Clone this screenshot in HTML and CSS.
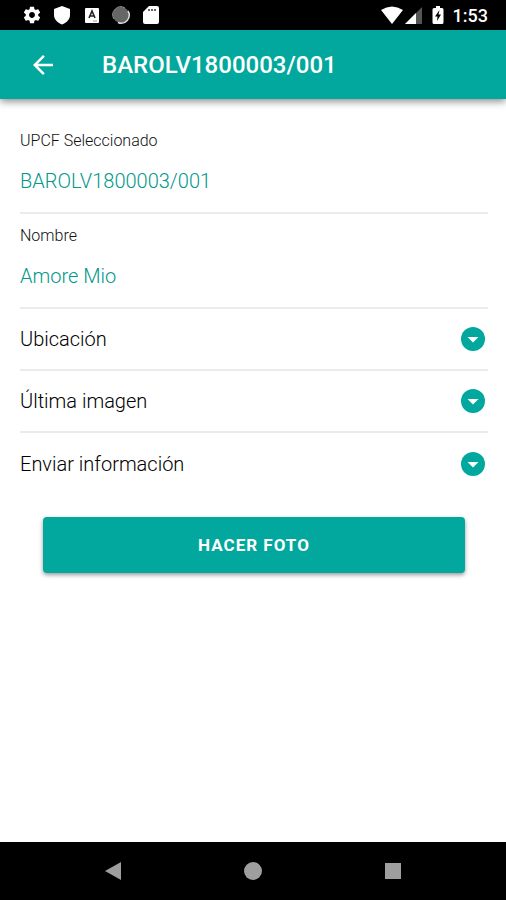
FILE: index.html
```html
<!DOCTYPE html>
<html lang="es">
<head>
<meta charset="UTF-8" />
<meta name="viewport" content="width=device-width, initial-scale=1" />
<title>BAROLV1800003/001</title>
<link rel="stylesheet" href="styles.css">
</head>
<body>

  <div class="status-bar">
    <div class="status-icons">
      <svg width="20" height="20" viewBox="0 0 24 24" fill="#fff" aria-hidden="true"><path d="M19.43 12.98c.04-.32.07-.64.07-.98s-.03-.66-.07-.98l2.11-1.65c.19-.15.24-.42.12-.64l-2-3.46c-.12-.22-.39-.3-.61-.22l-2.49 1c-.52-.4-1.08-.73-1.69-.98l-.38-2.65C14.46 2.18 14.25 2 14 2h-4c-.25 0-.46.18-.49.42l-.38 2.65c-.61.25-1.17.59-1.69.98l-2.49-1c-.23-.09-.49 0-.61.22l-2 3.46c-.13.22-.07.49.12.64l2.11 1.65c-.04.32-.07.65-.07.98s.03.66.07.98l-2.11 1.65c-.19.15-.24.42-.12.64l2 3.46c.12.22.39.3.61.22l2.49-1c.52.4 1.08.73 1.69.98l.38 2.65c.03.24.24.42.49.42h4c.25 0 .46-.18.49-.42l.38-2.65c.61-.25 1.17-.59 1.69-.98l2.49 1c.23.09.49 0 .61-.22l2-3.46c.12-.22.07-.49-.12-.64l-2.11-1.65zM12 15.5c-1.93 0-3.5-1.57-3.5-3.5s1.57-3.5 3.5-3.5 3.5 1.57 3.5 3.5-1.57 3.5-3.5 3.5z"/></svg>
      <svg width="20" height="20" viewBox="0 0 20 20" fill="#fff" aria-hidden="true"><path d="M10 1l8 3v6c0 4-3 7.5-8 9.5C5 17.5 2 14 2 10V4z"/></svg>
      <svg width="20" height="20" viewBox="0 0 20 20" aria-hidden="true"><rect x="3" y="3" width="14" height="15" rx="1" fill="#fff"/><path d="M7 13l3-7 3 7M8 11h4" fill="none" stroke="#222" stroke-width="1.6"/><path d="M11 16h4" stroke="#999"/></svg>
      <svg width="20" height="20" viewBox="0 0 20 20" aria-hidden="true"><circle cx="9" cy="10" r="8" fill="#666"/><path d="M16 6a8 8 0 0 1-10 11.5" fill="none" stroke="#ddd" stroke-width="1.5"/><path d="M2 14A8 8 0 0 1 13 3" fill="none" stroke="#999"/></svg>
      <svg width="20" height="20" viewBox="0 0 20 20" aria-hidden="true"><path d="M7 1h8q2 0 2 2v14q0 2-2 2H3q-2 0-2-2V7z" fill="#fff"/><path d="M7 4v2M10 4v2M13 4v2" stroke="#333" stroke-width="1.5"/></svg>
    </div>
    <div class="status-system">
      <svg width="22" height="20" viewBox="0 0 22 20" fill="#fff" aria-hidden="true"><path d="M0 5Q11-2 22 5L11 19z"/></svg>
      <svg width="18" height="20" viewBox="0 0 18 20" aria-hidden="true"><path d="M17 2v17H0z" fill="#555"/><path d="M11 8v11H0z" fill="#fff"/></svg>
      <svg class="battery" width="12" height="20" viewBox="0 0 12 20" aria-hidden="true"><path d="M4 1h4v2h2q1.5 0 1.5 1.5v13q0 1.5-1.5 1.5H2Q.5 19 .5 17.5v-13Q.5 3 2 3h2z" fill="#fff"/><path d="M7.5 5L3 11.5h2.5L5 16l4-6.5H6.5z" fill="#000"/></svg>
      <span class="clock">1:53</span>
    </div>
  </div>

  <header class="app-bar">
    <a class="back" href="#" aria-label="Volver">
      <svg width="30" height="30" viewBox="0 0 24 24" fill="#fff" aria-hidden="true"><path d="M20 11H7.83l5.59-5.59L12 4l-8 8 8 8 1.41-1.41L7.83 13H20v-2z"/></svg>
    </a>
    <h1>BAROLV1800003/001</h1>
  </header>

  <main class="content">
    <dl class="fields">
      <div class="field">
        <dt>UPCF Seleccionado</dt>
        <dd>BAROLV1800003/001</dd>
      </div>
      <div class="field">
        <dt>Nombre</dt>
        <dd>Amore Mio</dd>
      </div>
    </dl>

    <button class="section" type="button" aria-expanded="false">
      <span>Ubicación</span>
      <svg width="24" height="24" viewBox="0 0 24 24" aria-hidden="true"><circle cx="12" cy="12" r="12" fill="#02a89d"/><path d="M6.5 10h11L12 15.5z" fill="#fff"/></svg>
    </button>
    <button class="section" type="button" aria-expanded="false">
      <span>Última imagen</span>
      <svg width="24" height="24" viewBox="0 0 24 24" aria-hidden="true"><circle cx="12" cy="12" r="12" fill="#02a89d"/><path d="M6.5 10h11L12 15.5z" fill="#fff"/></svg>
    </button>
    <button class="section section-last" type="button" aria-expanded="false">
      <span>Enviar información</span>
      <svg width="24" height="24" viewBox="0 0 24 24" aria-hidden="true"><circle cx="12" cy="12" r="12" fill="#02a89d"/><path d="M6.5 10h11L12 15.5z" fill="#fff"/></svg>
    </button>

    <button class="photo-btn" type="button">HACER FOTO</button>
  </main>

  <nav class="nav-bar" aria-label="Sistema">
    <button type="button" aria-label="Atrás">
      <svg width="18" height="18" viewBox="0 0 18 18" fill="#9e9e9e" aria-hidden="true"><path d="M1 9L17 0v18z"/></svg>
    </button>
    <button type="button" aria-label="Inicio">
      <svg width="18" height="18" viewBox="0 0 18 18" fill="#9e9e9e" aria-hidden="true"><circle cx="9" cy="9" r="9"/></svg>
    </button>
    <button type="button" aria-label="Recientes">
      <svg width="18" height="18" viewBox="0 0 18 18" fill="#9e9e9e" aria-hidden="true"><rect x="1" y="1" width="16" height="16"/></svg>
    </button>
  </nav>

</body>
</html>
```
FILE: styles.css
```css
* {
  box-sizing: border-box;
}

body {
  margin: 0;
  min-height: 100vh;
  display: flex;
  flex-direction: column;
  font-family: Roboto, sans-serif;
  background: #fff;
  color: #222;
}

button {
  font-family: inherit;
  border: none;
  background: none;
  cursor: pointer;
}

svg {
  display: block;
}

.status-bar {
  display: flex;
  justify-content: space-between;
  align-items: center;
  height: 30px;
  padding: 0 18px 0 22px;
  background: #000;
  color: #fff;
}

.status-icons {
  display: flex;
  gap: 10px;
}

.status-system {
  display: flex;
  align-items: center;
  gap: 2px;
}

.battery {
  margin: 0 7px;
}

.clock {
  font-size: 18px;
  font-weight: 500;
}

.app-bar {
  display: flex;
  align-items: center;
  gap: 44px;
  height: 69px;
  padding: 0 28px;
  background: #02a89d;
  color: #fff;
  box-shadow: 0 2px 8px rgba(0, 0, 0, 0.5);
}

.app-bar h1 {
  margin: 0;
  font-size: 24px;
  font-weight: 500;
}

.content {
  flex: 1;
  padding: 20px 18px 20px 20px;
}

.fields {
  margin: 0;
}

.field {
  padding: 12px 0 19px;
  border-bottom: 2px solid #ebebeb;
}

.field dt {
  margin-bottom: 18px;
  font-size: 16px;
  line-height: 20px;
  font-weight: 300;
  color: #111;
}

.field dd {
  margin: 0;
  font-size: 20px;
  line-height: 24px;
  font-weight: 300;
  color: #02988a;
}

.section {
  display: flex;
  justify-content: space-between;
  align-items: center;
  width: 100%;
  height: 62px;
  padding: 0 3px 0 0;
  border-bottom: 2px solid #ebebeb;
  font-size: 20px;
  font-weight: 300;
  color: #000;
}

.section-last {
  border-bottom: none;
}

.photo-btn {
  display: block;
  width: 90%;
  height: 56px;
  margin: 22px auto 0;
  border-radius: 4px;
  background: #02a89d;
  color: #fff;
  font-size: 17px;
  font-weight: 700;
  letter-spacing: 1px;
  box-shadow: 0 2px 4px rgba(0, 0, 0, 0.4);
}

.nav-bar {
  display: flex;
  height: 58px;
  padding: 0 43px;
  background: #000;
}

.nav-bar button {
  flex: 1;
  display: flex;
  justify-content: center;
  align-items: center;
}
```
